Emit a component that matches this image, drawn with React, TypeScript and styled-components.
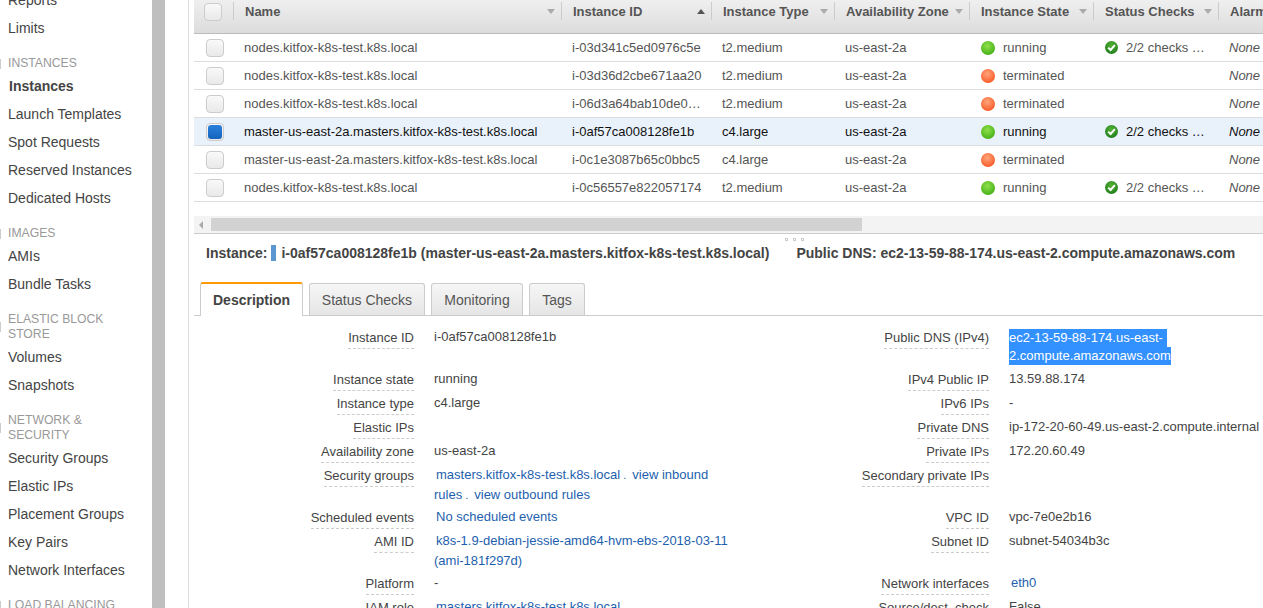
import React from "react";
import styled, { createGlobalStyle } from "styled-components";

const GlobalStyle = createGlobalStyle`
  html, body {
    margin: 0;
    height: 100%;
    overflow: hidden;
    background: #fff;
    font-family: "Liberation Sans", Arial, sans-serif;
    font-size: 14px;
    color: #444;
  }
`;

const Page = styled.div`
  display: flex;
  width: 1263px;
  height: 608px;
  overflow: hidden;
`;

/* left nav, scrolled so that "Reports" is cut by the window */
const Sidebar = styled.nav`
  width: 152px;
  flex: none;
  margin-top: -14px;
`;

const NavHeading = styled.div`
  position: relative;
  margin: 14px 0 1px;
  padding: 0 20px 0 8px;
  font-size: 12.2px;
  line-height: 15px;
  color: #999;
  text-transform: uppercase;
  &::before {
    content: "";
    position: absolute;
    left: 0;
    top: 50%;
    transform: translateY(-50%);
    height: 10px;
    width: 1px;
    background: #ccc;
  }
`;

const NavItem = styled.div<{ $active?: boolean }>`
  height: 28px;
  line-height: 28px;
  padding-left: ${(p) => (p.$active ? "9px" : "8px")};
  font-weight: ${(p) => (p.$active ? "bold" : "normal")};
  white-space: nowrap;
`;

const Gutter = styled.div`
  width: 13px;
  flex: none;
  background: #bfbfbf;
`;

const GutterGap = styled.div`
  width: 24px;
  flex: none;
  border-right: 1px solid #ddd;
  box-sizing: border-box;
`;

const Main = styled.main`
  flex: 1;
  min-width: 0;
  padding-left: 5px;
  overflow: hidden;
`;

const COLUMNS = "39px 328px 150px 123px 135px 124px 125px 120px";

const HeaderRow = styled.div`
  display: grid;
  grid-template-columns: ${COLUMNS};
  height: 33px;
  background: linear-gradient(#efefef, #dcdcdc);
  border-bottom: 1px solid #bbb;
`;

const HeaderCell = styled.div`
  display: flex;
  justify-content: space-between;
  align-items: center;
  height: 18px;
  margin-top: 2px;
  padding: 0 6px 0 11px;
  border-left: 1px solid #ccc;
  font-size: 13px;
  font-weight: bold;
  color: #555;
  white-space: nowrap;
`;

const HeaderCheckCell = styled.div`
  padding: 3px 0 0 10px;
`;

const SortArrow = styled.span<{ $up?: boolean }>`
  width: 0;
  height: 0;
  border-left: 4px solid transparent;
  border-right: 4px solid transparent;
  ${(p) =>
    p.$up
      ? "border-bottom: 5px solid #555;"
      : "border-top: 5px solid #aaa;"}
`;

const Row = styled.div<{ $selected?: boolean }>`
  display: grid;
  grid-template-columns: ${COLUMNS};
  height: 27px;
  align-items: center;
  font-size: 13px;
  border-bottom: 1px solid #ddd;
  background: ${(p) => (p.$selected ? "#e9f1fb" : "#fff")};
  color: ${(p) => (p.$selected ? "#111" : "#555")};
`;

const Cell = styled.div`
  display: flex;
  align-items: center;
  padding-left: 11px;
  white-space: nowrap;
  overflow: hidden;
`;

const CheckCell = styled.div`
  padding-left: 12px;
  display: flex;
`;

const NoneText = styled.span`
  font-style: italic;
`;

const Checkbox = styled.span<{ $checked?: boolean }>`
  display: flex;
  align-items: center;
  justify-content: center;
  width: 18px;
  height: 18px;
  box-sizing: border-box;
  border: 1px solid #ccc;
  border-radius: 4px;
  background: linear-gradient(#f9f9f9, #e9e9e9);
  &::after {
    content: "";
    display: ${(p) => (p.$checked ? "block" : "none")};
    width: 14px;
    height: 14px;
    border-radius: 3px;
    background: linear-gradient(#2a80dc, #1464bd);
  }
`;

const StateDot = styled.span<{ $state: "running" | "terminated" }>`
  width: 14px;
  height: 14px;
  margin: 0 8px 0 1px;
  flex: none;
  border-radius: 50%;
  background: ${(p) =>
    p.$state === "running"
      ? "radial-gradient(circle at 45% 35%, #8fe04a, #4cb51c 70%, #3b9a12)"
      : "radial-gradient(circle at 45% 35%, #ffa57c, #f9622f 70%, #e04a1c)"};
`;

const CheckSvg = styled.svg`
  margin: 0 8px 0 1px;
  flex: none;
`;

const CheckIcon = () => (
  <CheckSvg width="13" height="13" viewBox="0 0 13 13">
    <defs>
      <radialGradient id="okFill" cx="50%" cy="35%" r="70%">
        <stop offset="0" stopColor="#55b335" />
        <stop offset="1" stopColor="#1c7a1c" />
      </radialGradient>
    </defs>
    <circle cx="6.5" cy="6.5" r="6.5" fill="url(#okFill)" />
    <path d="M3.2 6.6 5.6 9 9.9 4.2" fill="none" stroke="#fff" strokeWidth="2" />
  </CheckSvg>
);

const ScrollTrack = styled.div`
  position: relative;
  margin-top: 14px;
  height: 17px;
  background: #f3f3f3;
  border-bottom: 1px solid #ccc;
`;

const ScrollArrow = styled.span`
  position: absolute;
  left: 5px;
  top: 5px;
  border-top: 4px solid transparent;
  border-bottom: 4px solid transparent;
  border-right: 4px solid #aaa;
`;

const ScrollThumb = styled.div`
  position: absolute;
  left: 17px;
  top: 2px;
  width: 651px;
  height: 13px;
  background: #d2d2d2;
`;

const InstanceBar = styled.div`
  position: relative;
  display: flex;
  align-items: flex-start;
  height: 48px;
  box-sizing: border-box;
  padding: 9px 0 0 12px;
  line-height: 20px;
  font-weight: bold;
  white-space: nowrap;
`;

const InstanceSwatch = styled.span`
  width: 5px;
  height: 16px;
  margin: 2px 5px 0 4px;
  background: #5b97d0;
`;

const PublicDns = styled.span`
  margin-left: 27px;
`;

const GripDots = styled.div`
  position: absolute;
  left: 591px;
  top: 4px;
  display: flex;
  gap: 5px;
`;

const GripDot = styled.span`
  width: 3px;
  height: 3px;
  box-sizing: border-box;
  border: 1px solid #ccc;
`;

const TabStrip = styled.div`
  display: flex;
  align-items: flex-end;
  gap: 6px;
  height: 33px;
  padding-left: 6px;
  border-bottom: 1px solid #ccc;
`;

const Tab = styled.div<{ $active?: boolean; $width: number }>`
  box-sizing: border-box;
  display: flex;
  align-items: center;
  justify-content: center;
  width: ${(p) => p.$width}px;
  border: 1px solid #ccc;
  border-radius: 3px 3px 0 0;
  ${(p) =>
    p.$active
      ? `height: 34px;
         margin-bottom: -1px;
         border-top: 2px solid #f90;
         border-bottom: none;
         background: #fff;
         font-weight: bold;`
      : `height: 32px;
         border-bottom: none;
         background: linear-gradient(#f6f6f6, #e5e5e5);
         color: #555;`}
`;

const DetailGrid = styled.div`
  display: grid;
  grid-template-columns: 220px 335px 240px 274px;
  grid-auto-rows: minmax(24px, auto);
  padding-top: 11px;
  font-size: 13px;
  line-height: 20px;
`;

const LabelCell = styled.div`
  text-align: right;
`;

const LabelText = styled.span`
  display: inline-block;
  padding-top: 1px;
  border-bottom: 1px dashed #ccc;
  line-height: 20px;
`;

const ValueCell = styled.div<{ $wide?: boolean }>`
  padding: 0 ${(p) => (p.$wide ? "0" : "15px")} 2px 20px;
`;

const LinkText = styled.span`
  color: #1d5fae;
  &:first-child {
    margin-left: 2px;
  }
`;

const DotSep = styled.span`
  color: #1d5fae;
  margin: 0 6px 0 3px;
  font-size: 11px;
`;

const SelectedBlock = styled.div`
  padding: 2px 0;
`;

const SelectedLine = styled.span`
  display: block;
  width: fit-content;
  height: 18px;
  line-height: 18px;
  background: #3390ff;
  color: #fff;
`;

const NAV: { heading?: string; items: string[] }[] = [
  { items: ["Reports", "Limits"] },
  { heading: "Instances", items: ["Instances", "Launch Templates", "Spot Requests", "Reserved Instances", "Dedicated Hosts"] },
  { heading: "Images", items: ["AMIs", "Bundle Tasks"] },
  { heading: "Elastic Block Store", items: ["Volumes", "Snapshots"] },
  { heading: "Network & Security", items: ["Security Groups", "Elastic IPs", "Placement Groups", "Key Pairs", "Network Interfaces"] },
  { heading: "Load Balancing", items: [] },
];

const HEADERS = ["Name", "Instance ID", "Instance Type", "Availability Zone", "Instance State", "Status Checks", "Alarm"];

type Instance = {
  name: string;
  id: string;
  type: string;
  state: "running" | "terminated";
  selected?: boolean;
};

const NODE = "nodes.kitfox-k8s-test.k8s.local";
const MASTER = "master-us-east-2a.masters.kitfox-k8s-test.k8s.local";

const INSTANCES: Instance[] = [
  { name: NODE, id: "i-03d341c5ed0976c5e", type: "t2.medium", state: "running" },
  { name: NODE, id: "i-03d36d2cbe671aa20", type: "t2.medium", state: "terminated" },
  { name: NODE, id: "i-06d3a64bab10de0…", type: "t2.medium", state: "terminated" },
  { name: MASTER, id: "i-0af57ca008128fe1b", type: "c4.large", state: "running", selected: true },
  { name: MASTER, id: "i-0c1e3087b65c0bbc5", type: "c4.large", state: "terminated" },
  { name: NODE, id: "i-0c56557e822057174", type: "t2.medium", state: "running" },
];

const TABS = ["Description", "Status Checks", "Monitoring", "Tags"];
const TAB_WIDTHS = [103, 116, 92, 56];

const DETAILS: [string, React.ReactNode, string, React.ReactNode][] = [
  [
    "Instance ID",
    "i-0af57ca008128fe1b",
    "Public DNS (IPv4)",
    <SelectedBlock>
      <SelectedLine>ec2-13-59-88-174.us-east-&nbsp;</SelectedLine>
      <SelectedLine>2.compute.amazonaws.com</SelectedLine>
    </SelectedBlock>,
  ],
  ["Instance state", "running", "IPv4 Public IP", "13.59.88.174"],
  ["Instance type", "c4.large", "IPv6 IPs", "-"],
  ["Elastic IPs", "", "Private DNS", "ip-172-20-60-49.us-east-2.compute.internal"],
  ["Availability zone", "us-east-2a", "Private IPs", "172.20.60.49"],
  [
    "Security groups",
    <>
      <LinkText>masters.kitfox-k8s-test.k8s.local</LinkText>
      <DotSep>.</DotSep>
      <LinkText>view inbound rules</LinkText>
      <DotSep>.</DotSep>
      <LinkText>view outbound rules</LinkText>
    </>,
    "Secondary private IPs",
    "",
  ],
  ["Scheduled events", <LinkText>No scheduled events</LinkText>, "VPC ID", "vpc-7e0e2b16"],
  [
    "AMI ID",
    <LinkText>k8s-1.9-debian-jessie-amd64-hvm-ebs-2018-03-11 (ami-181f297d)</LinkText>,
    "Subnet ID",
    "subnet-54034b3c",
  ],
  ["Platform", "-", "Network interfaces", <LinkText>eth0</LinkText>],
  ["IAM role", <LinkText>masters.kitfox-k8s-test.k8s.local</LinkText>, "Source/dest. check", "False"],
];

export default function App() {
  return (
    <>
      <GlobalStyle />
      <Page>
        <Sidebar>
          {NAV.map((group, i) => (
            <div key={i}>
              {group.heading && <NavHeading>{group.heading}</NavHeading>}
              {group.items.map((item) => (
                <NavItem key={item} $active={item === "Instances"}>
                  {item}
                </NavItem>
              ))}
            </div>
          ))}
        </Sidebar>
        <Gutter />
        <GutterGap />
        <Main>
          <HeaderRow>
            <HeaderCheckCell>
              <Checkbox />
            </HeaderCheckCell>
            {HEADERS.map((h) => (
              <HeaderCell key={h}>
                {h}
                {h !== "Alarm" && <SortArrow $up={h === "Instance ID"} />}
              </HeaderCell>
            ))}
          </HeaderRow>
          {INSTANCES.map((inst) => (
            <Row key={inst.id} $selected={inst.selected}>
              <CheckCell>
                <Checkbox $checked={inst.selected} />
              </CheckCell>
              <Cell>{inst.name}</Cell>
              <Cell>{inst.id}</Cell>
              <Cell>{inst.type}</Cell>
              <Cell>us-east-2a</Cell>
              <Cell>
                <StateDot $state={inst.state} />
                {inst.state}
              </Cell>
              <Cell>
                {inst.state === "running" && (
                  <>
                    <CheckIcon />
                    2/2 checks …
                  </>
                )}
              </Cell>
              <Cell>
                <NoneText>None</NoneText>
              </Cell>
            </Row>
          ))}
          <ScrollTrack>
            <ScrollArrow />
            <ScrollThumb />
          </ScrollTrack>
          <InstanceBar>
            Instance:
            <InstanceSwatch />
            i-0af57ca008128fe1b ({MASTER})
            <PublicDns>Public DNS: ec2-13-59-88-174.us-east-2.compute.amazonaws.com</PublicDns>
            <GripDots>
              <GripDot />
              <GripDot />
              <GripDot />
            </GripDots>
          </InstanceBar>
          <TabStrip>
            {TABS.map((t, i) => (
              <Tab key={t} $active={i === 0} $width={TAB_WIDTHS[i]}>
                {t}
              </Tab>
            ))}
          </TabStrip>
          <DetailGrid>
            {DETAILS.map(([l1, v1, l2, v2]) => (
              <React.Fragment key={l1}>
                <LabelCell>
                  <LabelText>{l1}</LabelText>
                </LabelCell>
                <ValueCell>{v1}</ValueCell>
                <LabelCell>
                  <LabelText>{l2}</LabelText>
                </LabelCell>
                <ValueCell $wide>{v2}</ValueCell>
              </React.Fragment>
            ))}
          </DetailGrid>
        </Main>
      </Page>
    </>
  );
}
